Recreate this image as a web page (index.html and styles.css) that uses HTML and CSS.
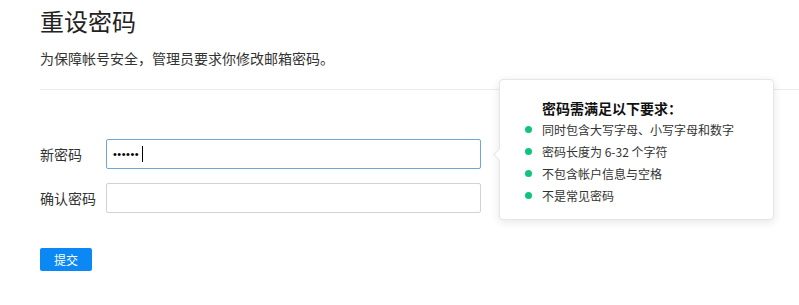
FILE: index.html
```html
<!DOCTYPE html>
<html lang="zh-CN">
<head>
    <meta charset="UTF-8">
    <meta name="viewport" content="width=device-width, initial-scale=1.0">
    <title>重设密码</title>
    <link rel="stylesheet" href="styles.css">
</head>
<body>
    <div class="page">
        <h1 class="title">重设密码</h1>
        <p class="desc">为保障帐号安全，管理员要求你修改邮箱密码。</p>
        <form class="reset-form">
            <div class="form-row">
                <label for="newPwd">新密码</label>
                <input type="password" id="newPwd" class="input" value="123456" autofocus>
                <span class="caret"></span>
                <div class="tip">
                    <div class="tip-title">密码需满足以下要求：</div>
                    <ul class="tip-list">
                        <li>同时包含大写字母、小写字母和数字</li>
                        <li>密码长度为 6-32 个字符</li>
                        <li>不包含帐户信息与空格</li>
                        <li>不是常见密码</li>
                    </ul>
                </div>
            </div>
            <div class="form-row">
                <label for="confirmPwd">确认密码</label>
                <input type="password" id="confirmPwd" class="input">
            </div>
            <div class="form-actions">
                <button type="submit" class="btn">提交</button>
            </div>
        </form>
    </div>
</body>
</html>
```

FILE: styles.css
```css
body {
    margin: 0;
    font-family: "Noto Sans CJK SC", "Microsoft YaHei", sans-serif;
    color: #333;
    background-color: #fff;
}
.page {
    padding-left: 40px;
}
.title {
    margin: 0;
    padding-top: 5px;
    font-size: 24px;
    font-weight: normal;
    line-height: 32px;
    color: #222;
}
.desc {
    margin: 11px 0 0;
    padding-bottom: 21px;
    font-size: 14px;
    line-height: 20px;
    border-bottom: 1px solid #ebebeb;
}
.reset-form {
    padding-top: 49px;
}
.form-row {
    position: relative;
    display: flex;
    align-items: center;
    height: 30px;
    margin-bottom: 14px;
}
.form-row label {
    width: 66px;
    font-size: 14px;
    line-height: 20px;
}
.input {
    box-sizing: border-box;
    width: 375px;
    height: 30px;
    padding: 0 6px;
    border: 1px solid #d2d2d2;
    border-radius: 2px;
    font-family: "Liberation Sans", Arial, sans-serif;
    font-size: 11px;
    letter-spacing: 0.5px;
    color: #000;
    caret-color: transparent;
    outline: none;
}
.input:focus {
    border-color: #6ea6da;
}
.caret {
    position: absolute;
    left: 102px;
    top: 7px;
    width: 1px;
    height: 16px;
    background-color: #000;
}
.form-actions {
    padding-top: 19px;
}
.btn {
    width: 52px;
    height: 23px;
    padding: 0;
    border: none;
    border-radius: 2px;
    background-color: #0b88f4;
    color: #fff;
    font-family: inherit;
    font-size: 12px;
    cursor: pointer;
}
.tip {
    position: absolute;
    left: 459px;
    top: -60px;
    box-sizing: border-box;
    width: 275px;
    height: 141px;
    padding: 18px 14px 14px 42px;
    background-color: #fff;
    border: 1px solid #e6e6e6;
    border-radius: 4px;
    box-shadow: 0 2px 10px rgba(0, 0, 0, 0.1);
}
.tip::before {
    content: '';
    position: absolute;
    left: -5px;
    top: 70px;
    width: 8px;
    height: 8px;
    background-color: #fff;
    border-left: 1px solid #e6e6e6;
    border-bottom: 1px solid #e6e6e6;
    transform: rotate(45deg);
}
.tip-title {
    margin-bottom: 1px;
    font-size: 14px;
    font-weight: bold;
    line-height: 20px;
    color: #111;
}
.tip-list {
    margin: 0;
    padding: 0;
    list-style: none;
}
.tip-list li {
    position: relative;
    font-size: 12px;
    line-height: 22px;
    color: #333;
}
.tip-list li::before {
    content: '';
    position: absolute;
    left: -17px;
    top: 7px;
    width: 7px;
    height: 7px;
    border-radius: 50%;
    background-color: #10c47c;
}
```
